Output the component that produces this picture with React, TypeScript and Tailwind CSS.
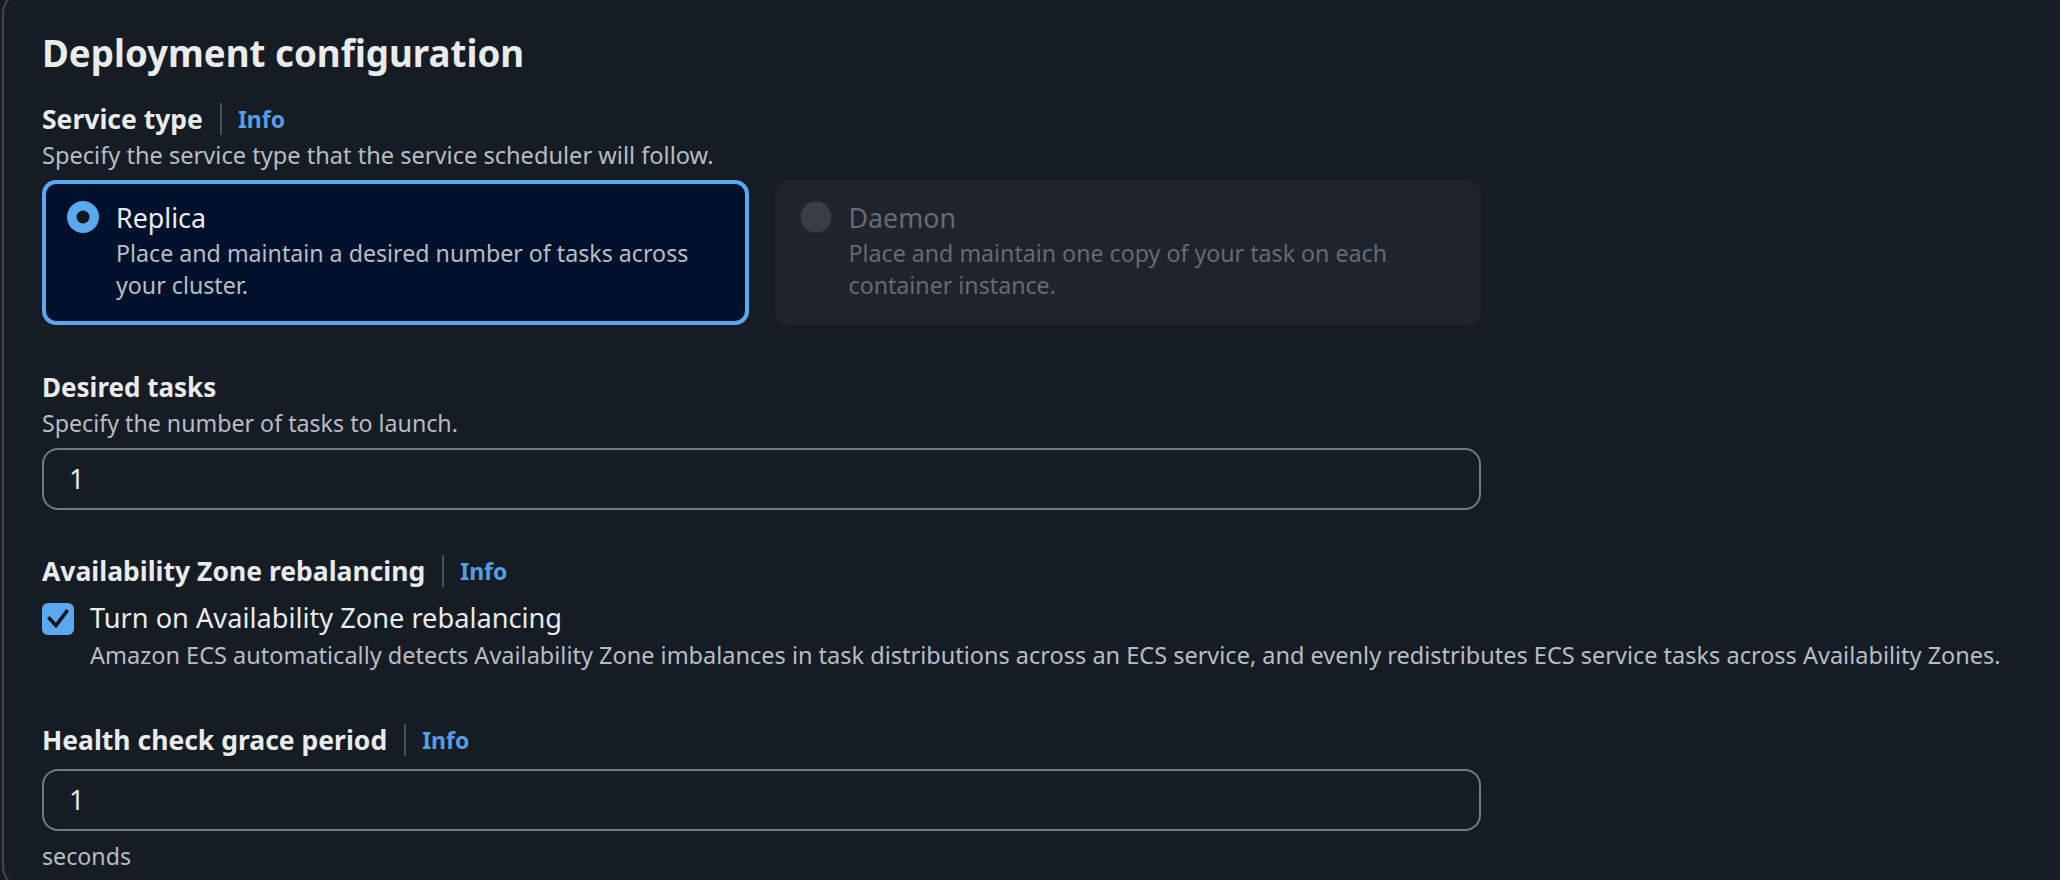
import React from "react";

const font = { fontFamily: '"Noto Sans", "Open Sans", sans-serif' };

function InfoLabel({ label }: { label: string }) {
  return (
    <div className="flex h-[32px] items-center">
      <span className="text-[26.5px] font-bold leading-[32px] text-[#e9ebed]">{label}</span>
      <span className="ml-[17px] h-[32px] w-[2px] bg-[#4b515b]" />
      <span className="ml-[16px] text-[23px] font-bold leading-[32px] text-[#539fe5]">Info</span>
    </div>
  );
}

function NumberInput({ value }: { value: string }) {
  return (
    <div className="flex h-[62px] w-[1439px] items-center rounded-[16px] border-2 border-[#737a86] pl-[25px]">
      <span className="text-[27px] leading-[32px] text-[#e9ebed]">{value}</span>
    </div>
  );
}

export default function App() {
  return (
    <div className="flex h-[880px] w-full flex-col overflow-hidden bg-[#161c24]" style={font}>
      <div className="-mt-[10px] ml-[2px] h-[900px] w-[2200px] shrink-0 rounded-[24px] border-2 border-[#414651] pl-[38px] pt-[39px]">
        <h2 className="text-[36.7px] font-bold leading-[44px] text-[#e9ebed]">Deployment configuration</h2>

        <div className="mt-[28px]">
          <InfoLabel label="Service type" />
        </div>
        <p className="mt-[4px] text-[23.6px] leading-[32px] text-[#b8bdc5]">
          Specify the service type that the service scheduler will follow.
        </p>

        <div className="mt-[9px] grid w-[1439px] grid-cols-2 gap-[26px]">
          <div className="flex h-[145px] gap-[17px] rounded-[14px] border-4 border-[#5aa9f0] bg-[#02112b] pl-[21px] pt-[17px]">
            <svg width="32" height="32" viewBox="0 0 32 32" className="shrink-0">
              <circle cx="16" cy="16" r="16" fill="#5aa9f0" />
              <circle cx="16" cy="16" r="6.5" fill="#10151d" />
            </svg>
            <div className="mt-[1px] flex flex-col">
              <span className="text-[26.8px] leading-[32px] text-[#e9ebed]">Replica</span>
              <span className="mt-[3px] whitespace-nowrap text-[23.2px] leading-[32px] text-[#b8bdc5]">
                Place and maintain a desired number of tasks across
                <br />
                your cluster.
              </span>
            </div>
          </div>
          <div className="flex h-[145px] gap-[17px] rounded-[14px] border-4 border-[#1e232c] bg-[#1e232c] pl-[21px] pt-[17px]">
            <svg width="32" height="32" viewBox="0 0 32 32" className="shrink-0">
              <circle cx="16" cy="16" r="15.5" fill="#393d47" />
            </svg>
            <div className="mt-[1px] flex flex-col">
              <span className="text-[26.8px] leading-[32px] text-[#656b75]">Daemon</span>
              <span className="mt-[3px] whitespace-nowrap text-[23.2px] leading-[32px] text-[#656b75]">
                Place and maintain one copy of your task on each
                <br />
                container instance.
              </span>
            </div>
          </div>
        </div>

        <div className="mt-[46px] text-[26px] font-bold leading-[32px] text-[#e9ebed]">Desired tasks</div>
        <p className="mt-[4px] text-[23.2px] leading-[32px] text-[#b8bdc5]">Specify the number of tasks to launch.</p>
        <div className="mt-[9px]">
          <NumberInput value="1" />
        </div>

        <div className="mt-[45px]">
          <InfoLabel label="Availability Zone rebalancing" />
        </div>
        <div className="mt-[15px] flex gap-[16px]">
          <div className="mt-[1px] flex h-[32px] w-[32px] shrink-0 items-center justify-center rounded-[6px] bg-[#5aa9f0]">
            <svg width="32" height="32" viewBox="0 0 32 32">
              <path d="M7.5 15.5 L14 22.5 L24.5 8.5" fill="none" stroke="#0f141a" strokeWidth="3.6" strokeLinecap="square" />
            </svg>
          </div>
          <span className="text-[27.2px] leading-[32px] text-[#e9ebed]">Turn on Availability Zone rebalancing</span>
        </div>
        <p className="mt-[4px] whitespace-nowrap pl-[48px] text-[23.5px] leading-[32px] text-[#b8bdc5]">
          Amazon ECS automatically detects Availability Zone imbalances in task distributions across an ECS service, and evenly redistributes ECS service tasks across Availability Zones.
        </p>

        <div className="mt-[53px]">
          <InfoLabel label="Health check grace period" />
        </div>
        <div className="mt-[13px]">
          <NumberInput value="1" />
        </div>
        <p className="mt-[9px] text-[23.2px] leading-[32px] text-[#b8bdc5]">seconds</p>
      </div>
    </div>
  );
}
